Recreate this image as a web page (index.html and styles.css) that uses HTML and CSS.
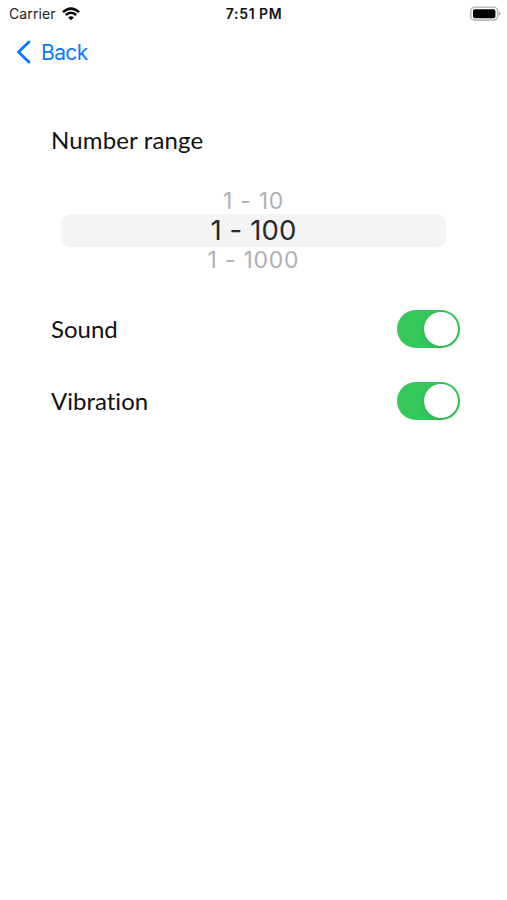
FILE: index.html
```html
<!DOCTYPE html>
<html lang="en">
<head>
<meta charset="utf-8">
<title>Settings</title>
<link rel="stylesheet" href="styles.css">
</head>
<body>
<header class="status">
  <div class="carrier"><span>Carrier</span>
    <svg class="wifi" width="18" height="14" viewBox="0 0 18 14" fill="none" stroke="#000" stroke-width="2.5"><path d="M1 5.1Q9-1.9 17 5.1M3.8 8Q9 3.4 14.2 8"/><path d="M9 13.3 6.2 10.5Q9 8.2 11.8 10.5Z" fill="#000" stroke="none"/></svg>
  </div>
  <span class="time">7:51 PM</span>
  <svg class="battery" width="32" height="16" viewBox="0 0 32 16"><rect x="1.7" y="1.3" width="27" height="12.8" rx="4" fill="#fff" stroke="#bbb" stroke-width="1.6"/><rect x="4" y="3.3" width="22.4" height="9" rx="2"/><path d="M29.8 5.4Q31.6 6.2 31.6 7.6T29.8 9.8Z" fill="#aaa"/></svg>
</header>
<nav class="nav">
  <a class="back">
    <svg width="15" height="24" viewBox="0 0 15 24" fill="none" stroke="#0a7cff" stroke-width="3" stroke-linecap="round" stroke-linejoin="round"><path d="M12.9 2 2.5 12 12.9 22"/></svg>
    <span>Back</span>
  </a>
</nav>
<main class="settings">
  <h1 class="label range">Number range</h1>
  <div class="picker">
    <div class="option">1 - 10</div>
    <div class="option selected">1 - 100</div>
    <div class="option">1 - 1000</div>
  </div>
  <div class="row"><span class="label">Sound</span><span class="switch"><span class="knob"></span></span></div>
  <div class="row"><span class="label">Vibration</span><span class="switch"><span class="knob"></span></span></div>
</main>
</body>
</html>
```
FILE: styles.css
```css
* { box-sizing: border-box; }
body { margin: 0; height: 900px; background: #fff; color: #111; font-family: Inter, sans-serif; overflow: hidden; }
.status { display: grid; grid-template-columns: 1fr auto 1fr; align-items: center; height: 27px; padding: 0 6px 0 9px; }
.carrier { display: flex; align-items: center; gap: 6px; font-size: 14px; letter-spacing: .1px; color: #222; }
.time { font-size: 14px; font-weight: 600; letter-spacing: .7px; word-spacing: -.5px; margin: 0 1px 0 -1px; }
.battery { justify-self: end; }
.nav { height: 50px; padding-left: 16px; display: flex; align-items: center; }
.back { display: flex; align-items: center; gap: 10px; color: #0a7cff; font-size: 21px; letter-spacing: -.6px; }
.settings { padding: 43px 47px 0 51px; }
.label { margin: 0; font: 400 24px/40px Lato, sans-serif; font-variant-ligatures: none; }
.range { letter-spacing: .15px; }
.picker { margin: 28px 14px 0 10px; text-align: center; color: #b0b0b0; }
.option { font-size: 23px; line-height: 26px; letter-spacing: .75px; }
.selected { height: 33px; line-height: 33px; font-size: 27.5px; letter-spacing: .15px; color: #2a2a2a; background: #f4f4f4; border-radius: 9px; }
.row { display: flex; justify-content: space-between; align-items: center; height: 72px; }
.picker + .row { margin-top: 20px; }
.switch { display: flex; justify-content: flex-end; width: 63px; height: 38px; padding: 2px; border-radius: 19px; background: #34c759; }
.knob { width: 34px; height: 34px; border-radius: 50%; background: #fff; box-shadow: 0 2px 5px #0002; }
```
